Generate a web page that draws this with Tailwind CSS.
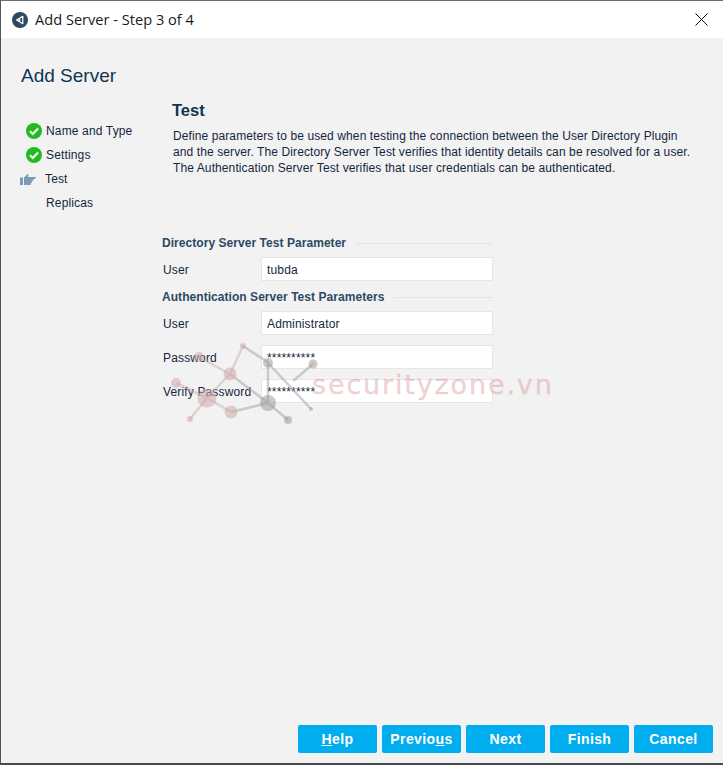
<!DOCTYPE html>
<html lang="en">

<head>
  <meta charset="UTF-8">
  <meta name="viewport" content="width=device-width, initial-scale=1.0">
  <title>Add Server - Step 3 of 4</title>
  <script src="https://cdn.jsdelivr.net/npm/@tailwindcss/browser@4"></script>
</head>

<body class="overflow-hidden">
  <div class="relative flex flex-col w-[723px] h-[765px] bg-[#f2f2f2] border-t border-t-[#6e6e6e] border-l border-l-[#555555] border-b-2 border-b-[#4a4a4a] font-['Liberation_Sans',sans-serif] text-[12px] tracking-[0.15px] text-[#14273d] overflow-hidden">
    <!-- Title bar -->
    <header class="flex items-center h-[37px] bg-white pl-[11px] pr-[14px] shrink-0">
      <svg class="w-4 h-4 mr-[7px]" viewBox="0 0 16 16">
        <circle cx="8" cy="8" r="8" fill="#2c4a63" />
        <path d="M10.8 4.3v7.4L4.6 8z" fill="none" stroke="#fff" stroke-width="1.2" stroke-linejoin="round" />
        <path d="M8.3 6.3v3.4L5.8 8z" fill="#fff" />
      </svg>
      <span class="font-['Open_Sans',sans-serif] text-[14.6px] tracking-normal text-[#1a1a1a]">Add Server - Step 3 of 4</span>
      <svg class="w-[13px] h-[13px] ml-auto mr-[1px]" viewBox="0 0 13 13">
        <path d="M.5.5l12 12M12.5.5l-12 12" stroke="#111" stroke-width="1" />
      </svg>
    </header>

    <main class="flex-1 flex flex-col">
      <h1 class="pl-5 pt-[27px] text-[19px] leading-[22px] tracking-normal text-[#0f3552]">Add Server</h1>

      <div class="flex">
        <!-- Steps -->
        <nav class="w-[161px] shrink-0 pt-[32px]">
          <ul class="flex flex-col">
            <li class="flex items-center h-6 pl-[25px]">
              <svg class="w-4 h-4 mr-[4px]" viewBox="0 0 16 16">
                <circle cx="8" cy="8" r="8" fill="#22bb22" />
                <path d="M4 8.2l2.8 2.8L12 5.5" fill="none" stroke="#fff" stroke-width="2" />
              </svg>
              Name and Type
            </li>
            <li class="flex items-center h-6 pl-[25px]">
              <svg class="w-4 h-4 mr-[4px]" viewBox="0 0 16 16">
                <circle cx="8" cy="8" r="8" fill="#22bb22" />
                <path d="M4 8.2l2.8 2.8L12 5.5" fill="none" stroke="#fff" stroke-width="2" />
              </svg>
              Settings
            </li>
            <li class="flex items-center h-6 pl-[19px]">
              <svg class="w-4 h-[11px] mr-[9px]" viewBox="0 0 16 11">
                <path d="M0 3.5h3V11H0zM4 3.5L7.5 0l1 .5L8 3h8l-1 2h-1.5l-.5 2h-1l-.5 2H11l-.5 2H4z" fill="#7f9ab5" />
              </svg>
              Test
            </li>
            <li class="flex items-center h-6 pl-[45px]">Replicas</li>
          </ul>
        </nav>

        <!-- Content -->
        <section class="flex-1 min-w-0">
          <h2 class="pl-[10px] pt-[13px] text-[16.5px] leading-5 font-bold tracking-normal text-[#0f3552]">Test</h2>
          <p class="pl-[11px] pt-[8px] w-[530px] leading-4 tracking-[0.1px]">Define parameters to be used when testing the connection between the User Directory Plugin and the server. The Directory Server Test verifies that identity details can be resolved for a user. The Authentication Server Test verifies that user credentials can be authenticated.</p>

          <form class="mt-[53px] w-[331px] flex flex-col">
            <div class="flex items-center h-[26px] pt-[2px]">
              <span class="font-bold tracking-[0.05px] text-[#2c4a63]">Directory Server Test Parameter</span>
              <span class="flex-1 ml-[9px] border-t border-[#dfe5ea]"></span>
            </div>
            <div class="flex items-center h-[28px]">
              <label class="w-[99px] pl-[1px] pt-[2px]">User</label>
              <div class="flex items-center flex-1 h-[24px] pl-[5px] pt-[2px] bg-white border border-[#e6e6e6]">tubda</div>
            </div>
            <div class="flex items-center h-[26px] pt-[2px]">
              <span class="font-bold tracking-[0.05px] text-[#2c4a63]">Authentication Server Test Parameters</span>
              <span class="flex-1 ml-[9px] border-t border-[#dfe5ea]"></span>
            </div>
            <div class="flex items-center h-[28px]">
              <label class="w-[99px] pl-[1px] pt-[2px]">User</label>
              <div class="flex items-center flex-1 h-[24px] pl-[5px] pt-[2px] bg-white border border-[#e6e6e6]">Administrator</div>
            </div>
            <div class="flex items-center h-[34px] mt-[3px]">
              <label class="w-[99px] pl-[1px] pt-[2px]">Password</label>
              <div class="flex items-center flex-1 h-[24px] pl-[5px] pt-[2px] bg-white border border-[#e6e6e6]">**********</div>
            </div>
            <div class="flex items-center h-[34px]">
              <label class="w-[99px] pl-[1px] pt-[2px]">Verify Password</label>
              <div class="flex items-center flex-1 h-[24px] pl-[5px] pt-[2px] bg-white border border-[#e6e6e6]">**********</div>
            </div>
          </form>
        </section>
      </div>

      <!-- Footer buttons -->
      <footer class="mt-auto flex justify-end gap-[5px] pr-[10px] pb-[10px] text-[14px] font-bold tracking-[0.4px] text-white">
        <button class="w-[79px] h-[28px] rounded-[2px] bg-[#00adef]"><u>H</u>elp</button>
        <button class="w-[79px] h-[28px] rounded-[2px] bg-[#00adef]">Previo<u>u</u>s</button>
        <button class="w-[79px] h-[28px] rounded-[2px] bg-[#00adef]">Next</button>
        <button class="w-[79px] h-[28px] rounded-[2px] bg-[#00adef]">Finish</button>
        <button class="w-[79px] h-[28px] rounded-[2px] bg-[#00adef]">Cancel</button>
      </footer>
    </main>

    <!-- Watermark -->
    <svg class="absolute left-[170px] top-[340px] w-[160px] h-[90px] pointer-events-none" viewBox="0 0 160 90">
      <g stroke-width="2.5">
        <g stroke="#c9a8a8" stroke-opacity=".45">
          <path d="M28 16l31 17M5 42l31 15M36 57l23-24M59 33l13-28M36 57L19 78M36 57l24 14" />
        </g>
        <g stroke="#a0a0a0" stroke-opacity=".5">
          <path d="M72 5l26 17M59 33l38 29M60 71l37-9M97 62l20 17M97 22v40M97 22l43 46M122 40l20-17" />
        </g>
      </g>
      <g fill="#cfa9a9" fill-opacity=".55">
        <circle cx="28" cy="16" r="5" />
        <circle cx="5" cy="42" r="5" />
        <circle cx="36" cy="57" r="9.5" />
        <circle cx="59" cy="33" r="6.5" />
        <circle cx="60" cy="71" r="6.5" />
        <circle cx="19" cy="78" r="3" />
        <circle cx="72" cy="5" r="3" />
      </g>
      <g fill="#a09a9a" fill-opacity=".55">
        <circle cx="97" cy="22" r="5" />
        <circle cx="142" cy="23" r="4.5" />
        <circle cx="97" cy="62" r="8" />
        <circle cx="117" cy="79" r="4" />
        <circle cx="140" cy="68" r="2" />
      </g>
    </svg>
    <span class="absolute left-[311px] top-[368px] text-[27px] leading-8 tracking-[1.85px] font-['DejaVu_Sans',sans-serif] text-[#d98f8f]/40 [-webkit-text-stroke:0.4px_#d98f8f59] pointer-events-none">securityzone.vn</span>
  </div>
</body>

</html>
